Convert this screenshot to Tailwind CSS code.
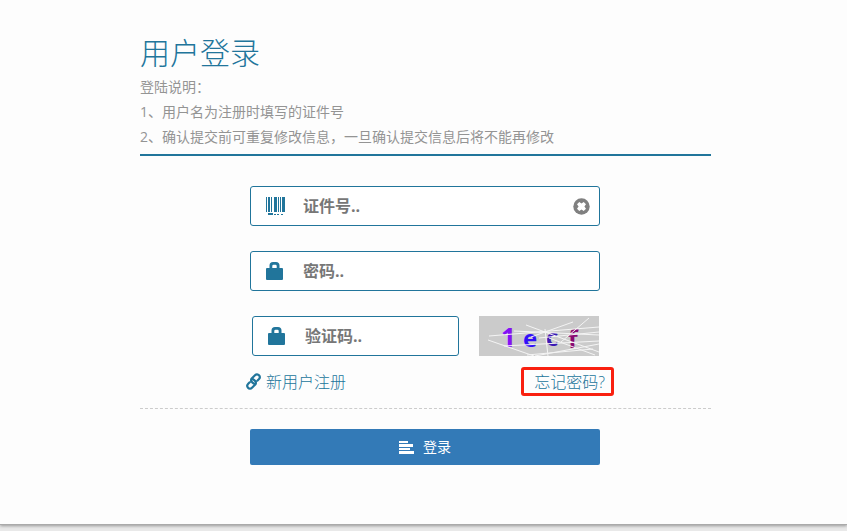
<!DOCTYPE html>
<html lang="zh-CN">
<head>
<meta charset="utf-8">
<meta name="viewport" content="width=device-width, initial-scale=1">
<title>用户登录</title>
<script src="https://cdn.jsdelivr.net/npm/@tailwindcss/browser@4"></script>
</head>
<body class="flex min-h-screen flex-col bg-[#e9e9e9] font-['Open_Sans','Noto_Sans_CJK_SC',sans-serif] text-[#999]">
<main class="grow border-b border-[#aaa] bg-[#fdfdfd] pt-8 pr-[136px] pl-[140px] shadow-[0_1px_3px_rgba(0,0,0,0.35)]">
  <header class="border-b-2 border-[#21759b] pb-[5px]">
    <h1 class="text-3xl leading-[42px] font-light text-[#21759b]">用户登录</h1>
    <div class="text-sm leading-[25px] text-[#949494]">
      <p>登陆说明：</p>
      <p>1、用户名为注册时填写的证件号</p>
      <p>2、确认提交前可重复修改信息，一旦确认提交信息后将不能再修改</p>
    </div>
  </header>
  <form class="pt-[30px]">
    <div class="mx-auto flex max-w-[351px] flex-col gap-[25px] pr-px">
      <div class="flex h-10 items-center rounded-[3px] border border-[#21759b] bg-white pr-[9px] pl-[15px]">
        <label for="idno" aria-label="证件号" class="w-[37px] shrink-0">
          <svg class="h-[19px] w-[19px]" viewBox="0 0 19 19" fill="#21759b" shape-rendering="crispEdges"><path d="M0 0h1v15H0zM2 0h2v15H2zM5 0h1v15H5zM8 0h3v15H8zM12 0h1v15h-1zM14 0h1v15h-1zM16 0h3v15h-3zM2 16h5v2H2zM8 17h2v1H8zM11 17h2v1h-2zM15 17h2v1h-2z"/></svg>
        </label>
        <input id="idno" type="text" placeholder="证件号.." class="min-w-0 grow bg-transparent text-base font-bold text-[#555] outline-none placeholder:text-[#777]">
        <button type="button" aria-label="清除">
          <svg class="h-[17px] w-[17px]" viewBox="0 0 17 17"><circle cx="8.500" cy="8.500" r="8.200" fill="#808080"/><path d="M6.300 4L8.500 5.600 10.700 4 13 6.300 11.400 8.500 13 10.700 10.700 13 8.500 11.400 6.300 13 4 10.700 5.600 8.500 4 6.300z" fill="#fff"/></svg>
        </button>
      </div>
      <div class="flex h-10 items-center rounded-[3px] border border-[#21759b] bg-white pr-[9px] pl-[15px]">
        <label for="pwd" aria-label="密码" class="w-[37px] shrink-0">
          <svg class="h-[18px] w-[17px]" viewBox="0 0 17 18" fill="#21759b"><path fill-rule="evenodd" d="M3.500 6V3.500Q3.500 0 7 0h3q3.500 0 3.500 3.500V6H16q1 0 1 1v10q0 1-1 1H1q-1 0-1-1V7q0-1 1-1zM6.300 6h4.400V4q0-1.300-1.300-1.300H7.600Q6.300 2.700 6.300 4z"/></svg>
        </label>
        <input id="pwd" type="password" placeholder="密码.." class="min-w-0 grow bg-transparent text-base font-bold text-[#555] outline-none placeholder:text-[#777]">
      </div>
      <div class="flex gap-5 pr-px pl-0.5">
        <div class="flex h-10 min-w-0 grow items-center rounded-[3px] border border-[#21759b] bg-white pr-[9px] pl-[15px]">
          <label for="code" aria-label="验证码" class="w-[37px] shrink-0">
            <svg class="h-[18px] w-[17px]" viewBox="0 0 17 18" fill="#21759b"><path fill-rule="evenodd" d="M3.500 6V3.500Q3.500 0 7 0h3q3.500 0 3.500 3.500V6H16q1 0 1 1v10q0 1-1 1H1q-1 0-1-1V7q0-1 1-1zM6.300 6h4.400V4q0-1.300-1.300-1.300H7.600Q6.300 2.700 6.300 4z"/></svg>
          </label>
          <input id="code" type="text" placeholder="验证码.." class="min-w-0 grow bg-transparent text-base font-bold text-[#555] outline-none placeholder:text-[#777]">
        </div>
        <svg class="h-10 w-[120px] shrink-0 bg-[#cbcbcb]" viewBox="0 0 120 40" role="img" aria-label="验证码图片">
          <g font-family="Open Sans, sans-serif" font-weight="bold" font-size="24">
            <text x="22" y="31" font-size="26" fill="#8410f5">1</text>
            <text x="44" y="31" fill="#3210f8">e</text>
            <text x="67" y="30" fill="#3b18b4">c</text>
            <text x="89" y="32" font-size="25" fill="#8b0870">f</text>
          </g>
          <path d="M10 20L120 11M9 24L55 40M47 9L120 36M35 15L120 19M94 6L52 21M110 2L82 26M66 13l3 27M70 22l46 17M25 30l95-5M56 40l64-12M48 39l66-6M60 22L120 16" fill="none" stroke="#f4f4f4"/>
        </svg>
      </div>
    </div>
    <div class="border-b border-dashed border-[#ccc] pt-[11px] pb-3">
      <div class="mx-auto flex max-w-[363px] items-center justify-between text-base font-light">
        <a href="#" class="flex items-center gap-[5px] pl-0.5 text-[#21759b]">
          <svg class="h-[17px] w-[15px]" viewBox="0 0 15 17" fill="none" stroke="#21759b" stroke-width="2.200" stroke-linecap="round" stroke-linejoin="round"><path d="M8 10.800C5.300 9.300 4.400 7 5.700 5.500L9 2.200C10.300.9 12 1.200 13 2.300 14 3.400 14 5 12.800 6.200L11.300 7.700M7 6.200C9.700 7.700 10.600 10 9.300 11.500L6 14.800C4.700 16.100 3 15.800 2 14.700 1 13.600 1 12 2.200 10.800L3.700 9.300"/></svg>
          新用户注册
        </a>
        <a href="#" class="-mr-[7px] flex h-[29px] items-center rounded-[3px] border-3 border-[#f9200f] pr-1.5 pl-[10px] text-[#21759b]">忘记密码?</a>
      </div>
    </div>
    <div class="mx-auto max-w-[351px] pt-5 pr-px pb-[58px]">
      <button type="submit" class="flex h-9 w-full items-center justify-center gap-[9px] rounded-[2px] bg-[#337ab7] text-sm text-white">
        <svg class="h-[13px] w-[15px]" viewBox="0 0 15 13" fill="#fff" shape-rendering="crispEdges"><path d="M0 0h9v2H0zM0 3h14v3H0zM0 7h11v2H0zM0 10h15v3H0z"/></svg>
        登录
      </button>
    </div>
  </form>
</main>
<footer class="h-1.5"></footer>
</body>
</html>
